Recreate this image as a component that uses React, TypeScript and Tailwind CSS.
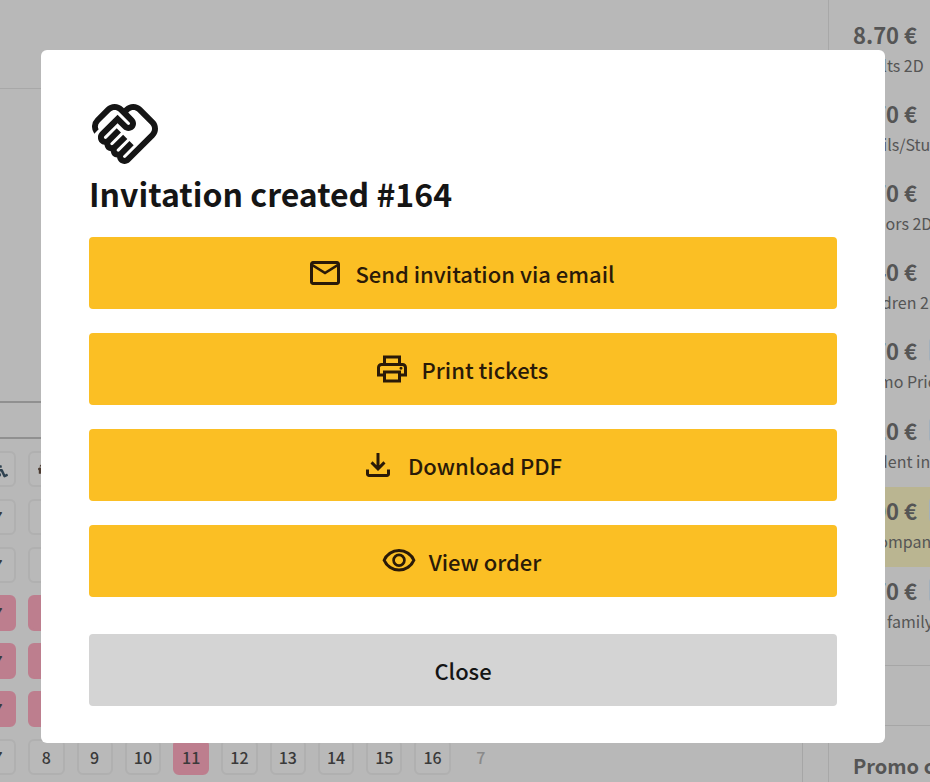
import type { ReactNode } from "react";
import { FaCouch, FaWheelchair } from "react-icons/fa";
import { MdOutlineHandshake } from "react-icons/md";

const ICONS = {
  mail: "M160-160q-33 0-56.5-23.5T80-240v-480q0-33 23.5-56.5T160-800h640q33 0 56.5 23.5T880-720v480q0 33-23.5 56.5T800-160H160Zm320-280L160-640v400h640v-400L480-440Zm0-80 320-200H160l320 200ZM160-640v-80 480-400Z",
  print:
    "M640-640v-120H320v120h-80v-200h480v200h-80Zm-480 80h640-640Zm560 100q17 0 28.5-11.5T760-500q0-17-11.5-28.5T720-540q-17 0-28.5 11.5T680-500q0 17 11.5 28.5T720-460Zm-80 260v-160H320v160h320Zm80 80H240v-160H80v-240q0-51 35-85.5t85-34.5h560q51 0 85.5 34.5T880-520v240H720v160Zm80-240v-160q0-17-11.5-28.5T760-560H200q-17 0-28.5 11.5T160-520v160h80v-80h480v80h80Z",
  download:
    "M480-320 280-520l56-58 104 104v-326h80v326l104-104 56 58-200 200ZM240-160q-33 0-56.5-23.5T160-240v-120h80v120h480v-120h80v120q0 33-23.5 56.5T720-160H240Z",
  eye: "M480-320q75 0 127.5-52.5T660-500q0-75-52.5-127.5T480-680q-75 0-127.5 52.5T300-500q0 75 52.5 127.5T480-320Zm0-72q-45 0-76.5-31.5T372-500q0-45 31.5-76.5T480-608q45 0 76.5 31.5T588-500q0 45-31.5 76.5T480-392Zm0 192q-146 0-266-81.5T40-500q54-137 174-218.5T480-800q146 0 266 81.5T920-500q-54 137-174 218.5T480-200Zm0-300Zm0 220q113 0 207.5-59.5T832-500q-50-101-144.5-160.5T480-720q-113 0-207.5 59.5T128-500q50 101 144.5 160.5T480-280Z",
};

const actions: { icon: keyof typeof ICONS; label: string }[] = [
  { icon: "mail", label: "Send invitation via email" },
  { icon: "print", label: "Print tickets" },
  { icon: "download", label: "Download PDF" },
  { icon: "eye", label: "View order" },
];

const prices = [
  { price: "8.70 €", label: "Adults 2D" },
  { price: "6.70 €", label: "Pupils/Students 2D" },
  { price: "6.70 €", label: "Seniors 2D" },
  { price: "5.40 €", label: "Children 2D" },
  { price: "5.70 €", label: "Promo Price", badge: true },
  { price: "0.20 €", label: "Student invitation", badge: true },
  { price: "0.00 €", label: "Accompanying person", badge: true, active: true },
  { price: "6.70 €", label: "One family", badge: true },
];

const seatRows = ["free", "free", "sold", "sold", "sold"];
const lastRow = ["7", "8", "9", "10", "11", "12", "13", "14", "15", "16"];

function Seat({ sold, children }: { sold?: boolean; children?: ReactNode }) {
  return (
    <button
      type="button"
      className={`flex h-9 items-center justify-center rounded-md border-2 text-base font-medium text-[#3a3a3a] ${
        sold ? "border-[#bd7e8e] bg-[#bd7e8e]" : "border-[#b0b0b0] bg-[#b9b9b9]"
      }`}
    >
      {children}
    </button>
  );
}

function SeatRow({ children }: { children: ReactNode }) {
  return <div className="grid grid-cols-11 gap-3">{children}</div>;
}

function SeatMap() {
  return (
    <div className="-ml-5 flex w-[519px] flex-col gap-3 pt-3">
      <SeatRow>
        <Seat><FaWheelchair size={20} className="text-[#2f4250]" /></Seat>
        <Seat><FaCouch size={16} className="text-[#4a3a30]" /></Seat>
      </SeatRow>
      {seatRows.map((state, i) => (
        <SeatRow key={i}>
          <Seat sold={state === "sold"}>7</Seat>
          <Seat sold={state === "sold"} />
        </SeatRow>
      ))}
      <SeatRow>
        {lastRow.map((n) => (
          <Seat key={n} sold={n === "11"}>{n}</Seat>
        ))}
        <span className="flex items-center justify-center text-base font-medium text-[#8a8a8a]">7</span>
      </SeatRow>
    </div>
  );
}

function PriceSidebar() {
  return (
    <aside className="w-[102px] shrink-0 overflow-hidden whitespace-nowrap border-l border-[#a8a8a8] pt-[11px] text-[#555]">
      {prices.map((p) => (
        <div
          key={p.label}
          className={`flex flex-col px-6 pt-2 ${p.badge ? "h-20" : "h-[79px]"} ${p.active ? "bg-[#bab591]" : ""}`}
        >
          <div className="flex items-center gap-3">
            <span className="text-[22px] leading-[30px] font-bold">{p.price}</span>
            {p.badge && <span className="size-6 shrink-0 rounded-sm bg-[#a3b0bc]" />}
          </div>
          <span className="text-base leading-8">{p.label}</span>
        </div>
      ))}
      <div className="mt-[18px] h-[61px] border-y border-[#a6a6a6]" />
      <h2 className="px-6 pt-6 text-xl leading-8 font-bold">Promo code</h2>
    </aside>
  );
}

function InvitationDialog() {
  return (
    <div
      role="dialog"
      aria-labelledby="dialog-title"
      className="w-full rounded-md bg-white px-12 pt-12 pb-[37px] text-[#151515]"
    >
      <MdOutlineHandshake size={72} />
      <h1 id="dialog-title" className="mb-5 text-[32px] leading-[47px] font-bold">Invitation created #164</h1>
      <div className="flex flex-col gap-6">
        {actions.map((a) => (
          <button
            key={a.label}
            type="button"
            className="flex h-[72px] items-center justify-center gap-3 rounded bg-[#fbbf24] pr-1 text-[22px] font-medium text-[#2a1a08]"
          >
            <svg viewBox="0 -960 960 960" className="size-9" fill="currentColor">
              <path d={ICONS[a.icon]} />
            </svg>
            {a.label}
          </button>
        ))}
      </div>
      <button type="button" className="mt-[37px] h-[72px] w-full rounded bg-[#d4d4d4] text-[22px] font-medium">
        Close
      </button>
    </div>
  );
}

export default function App() {
  return (
    <div className="relative h-screen overflow-hidden bg-[#b8b8b8] font-['Noto_Sans_CJK_SC',sans-serif]">
      <div className="flex min-h-full">
        <main className="min-w-0 flex-1 overflow-hidden pr-[25px]">
          <div className="h-[89px] border-b border-[#a8a8a8]" />
          <div className="mt-[312px] h-[38px] border-y-2 border-[#909090]" />
          <div className="h-[343px] border-r border-[#a6a6a6]">
            <SeatMap />
          </div>
        </main>
        <PriceSidebar />
      </div>
      <div className="absolute inset-0 flex items-start justify-center pt-[50px] pr-[45px] pl-[41px]">
        <InvitationDialog />
      </div>
    </div>
  );
}
